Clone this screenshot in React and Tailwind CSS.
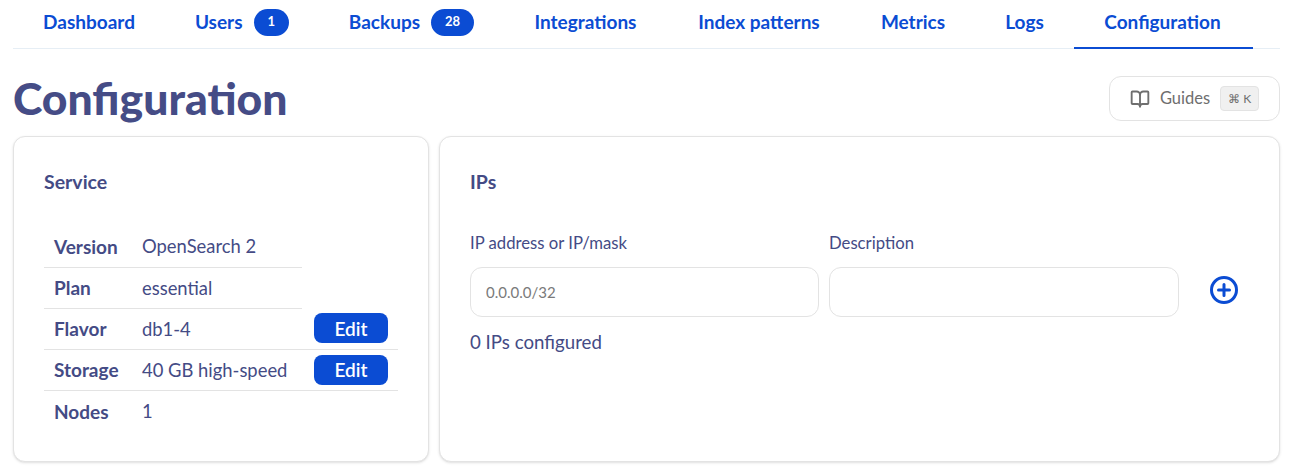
import React from 'react';
import { BookOpen } from 'lucide-react';

const font = "font-['Lato','Noto_Sans',sans-serif]";

const tabs = [
  { name: 'Dashboard', width: 'w-[152px]' },
  { name: 'Users', badge: '1', width: 'w-[154px]' },
  { name: 'Backups', badge: '28', width: 'w-[185px]' },
  { name: 'Integrations', width: 'w-[163px]' },
  { name: 'Index patterns', width: 'w-[184px]' },
  { name: 'Metrics', width: 'w-[124px]' },
  { name: 'Logs', width: 'w-[99px]' },
  { name: 'Configuration', width: 'w-[179px] pr-[2px]', active: true },
];

const rows = [
  { label: 'Version', value: 'OpenSearch 2' },
  { label: 'Plan', value: 'essential' },
  { label: 'Flavor', value: 'db1-4', edit: true },
  { label: 'Storage', value: '40 GB high-speed', edit: true },
  { label: 'Nodes', value: '1' },
];

const Tab = ({ name, badge, width, active }) => (
  <a className={`flex items-center justify-center shrink-0 h-[49px] ${width} pb-[3px] text-[19px] font-bold text-[#0b4cd3] -mb-px border-b-2 ${active ? 'border-[#0b4cd3]' : 'border-transparent'}`}>
    {name}
    {badge && (
      <span className="ml-[11px] h-[27px] px-[14px] flex items-center rounded-full bg-[#0b4cd3] text-white text-[13px] font-bold">{badge}</span>
    )}
  </a>
);

const App = () => (
  <div className={`${font} w-[1291px] h-[469px] bg-white overflow-hidden text-[#444b85]`}>
    <div className="ml-[13px] mr-[11px] flex border-b border-[#e6eef5]">
      {tabs.map((t) => <Tab key={t.name} {...t} />)}
    </div>

    {/* Header */}
    <div className="mr-[11px] mt-[24px] ml-[13px] flex items-start justify-between h-[63px]">
      <h1 className="text-[44.5px] leading-[50px] font-black text-[#454c86]">Configuration</h1>
      <button className="w-[171px] h-[45px] mt-[3px] flex items-center justify-center gap-[10px] bg-white border border-[#e3e3e3] rounded-xl text-[#6e6e6e] text-[16.5px]">
        <BookOpen className="w-5 h-5" strokeWidth={2.25} />
        Guides
        <span className="h-[25px] w-[39px] flex items-center justify-center rounded bg-[#f0f0f0] border border-[#e3e3e3] text-[12px]">⌘ K</span>
      </button>
    </div>

    <div className="flex gap-[10px] ml-[13px] mr-[11px]">
      {/* Service */}
      <div className="w-[416px] h-[326px] bg-white border border-[#e3e3e3] rounded-xl shadow-sm pl-[30px] pt-[34px]">
        <h2 className="text-[19.5px] leading-[22px] font-bold">Service</h2>
        <table className="mt-[33px] border-collapse w-[354px] table-fixed">
          <tbody>
            {rows.map((r, i) => (
              <tr key={r.label} className="h-[41px]">
                <td className={`w-[88px] pl-[10px] pt-[2px] text-[19px] font-bold ${i < 4 ? 'border-b border-[#e3e3e3]' : ''}`}>{r.label}</td>
                <td className={`w-[170px] pl-[10px] pt-[2px] text-[18.4px] ${i < 4 ? 'border-b border-[#e3e3e3]' : ''}`}>{r.value}</td>
                <td className={`w-[96px] pl-[12px] ${r.edit ? 'border-b border-[#e3e3e3]' : ''}`}>
                  {r.edit && (
                    <button className="w-[74px] h-[30px] pt-px rounded-lg bg-[#0b4cd3] text-white text-[19px] font-semibold flex items-center justify-center">Edit</button>
                  )}
                </td>
              </tr>
            ))}
          </tbody>
        </table>
      </div>

      {/* IPs */}
      <div className="w-[841px] h-[326px] bg-white border border-[#e3e3e3] rounded-xl shadow-sm pl-[30px] pt-[34px]">
        <h2 className="text-[19.5px] leading-[22px] font-bold">IPs</h2>
        <div className="mt-[38px] flex items-end">
          <label className="block w-[349px] mr-[10px]">
            <span className="block text-[16.7px] leading-[24px] mb-[12px]">IP address or IP/mask</span>
            <input placeholder="0.0.0.0/32" className="w-full h-[50px] px-[15px] border border-[#e3e3e3] rounded-xl text-[15px] placeholder:text-[#7a7a7a] outline-none" />
          </label>
          <label className="block w-[350px]">
            <span className="block text-[16.7px] leading-[24px] mb-[12px]">Description</span>
            <input className="w-full h-[50px] px-4 border border-[#e3e3e3] rounded-xl text-[16px] outline-none" />
          </label>
          <button className="ml-[30px] mb-[12px] text-[#0b4cd3]">
            <svg width="30" height="30" viewBox="0 0 30 30" fill="none" stroke="currentColor" strokeWidth="3" strokeLinecap="round">
              <circle cx="15" cy="15" r="12.5" />
              <path d="M15 9.5v11M9.5 15h11" />
            </svg>
          </button>
        </div>
        <p className="mt-[12px] text-[18.7px] leading-[26px]">0 IPs configured</p>
      </div>
    </div>
  </div>
);

export default App;
